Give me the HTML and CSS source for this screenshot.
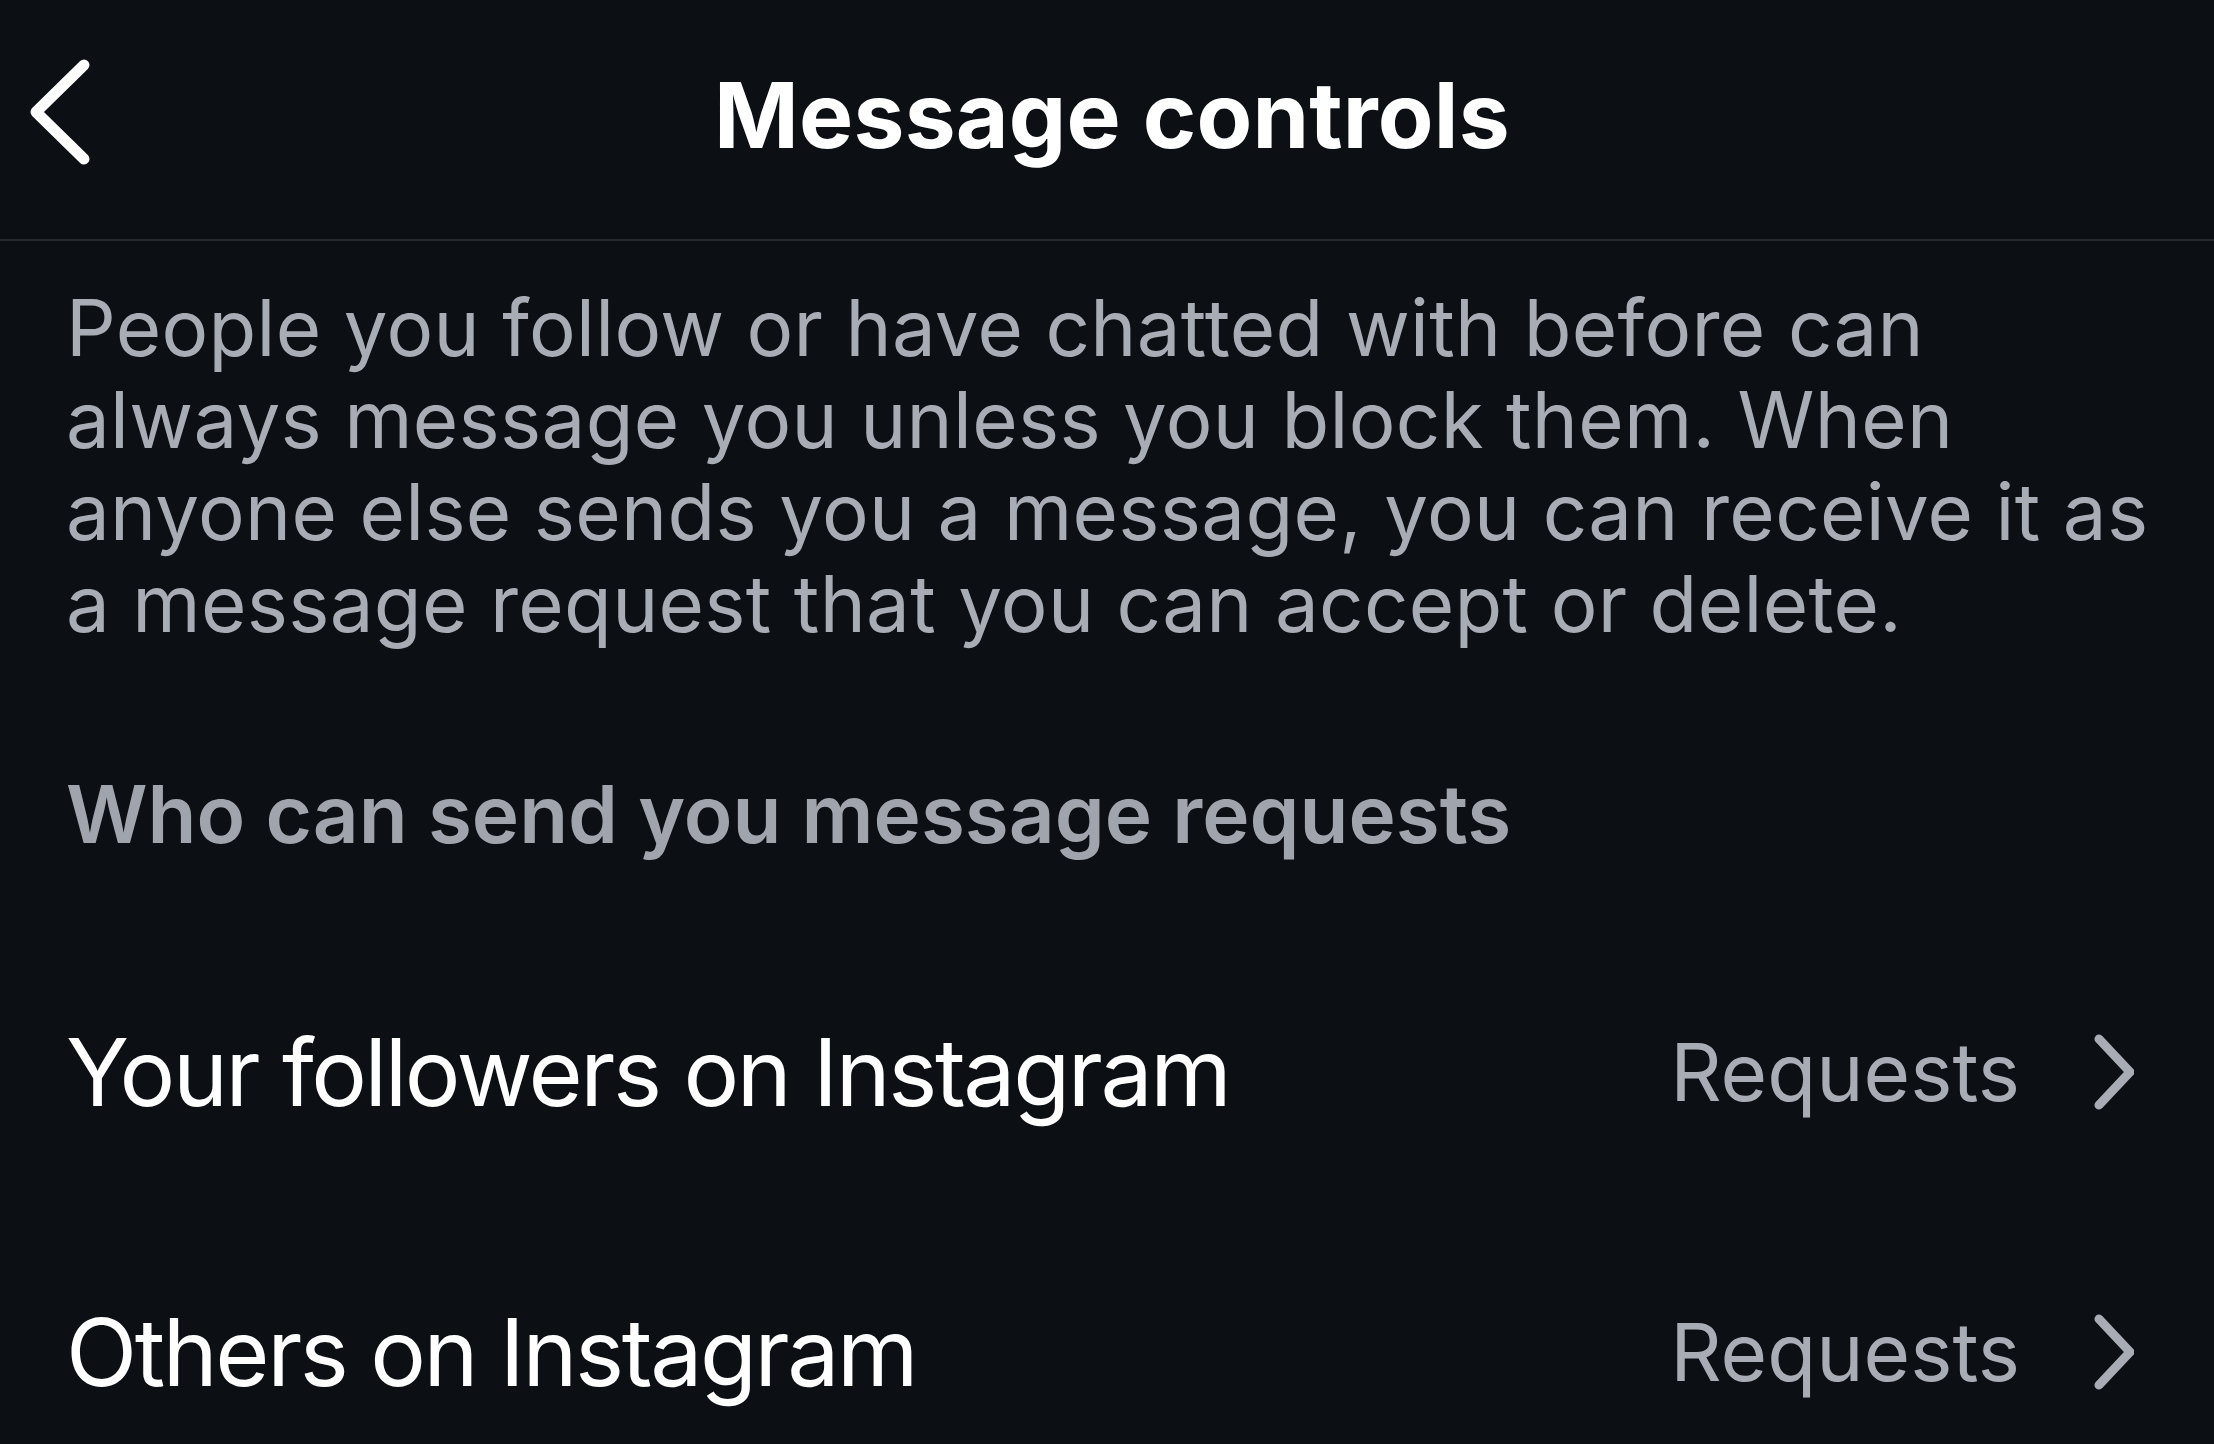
FILE: index.html
```html
<!DOCTYPE html>
<html>
<head>
    <meta charset="UTF-8">
    <meta name="viewport" content="width=device-width, initial-scale=1.0">
    <title>Message controls</title>
    <link rel="stylesheet" href="styles.css">
</head>
<body>
    <header class="top-bar">
        <a href="#" class="back" aria-label="Back">
            <svg width="70" height="120" viewBox="0 0 70 120">
                <path d="M62 13 L14 60 L62 107" fill="none" stroke="#ffffff" stroke-width="11" stroke-linecap="round" stroke-linejoin="round"/>
            </svg>
        </a>
        <h1 class="title">Message controls</h1>
        <div></div>
    </header>

    <main class="content">
        <p class="intro">People you follow or have chatted with before can always message you unless you block them. When anyone else sends you a message, you can receive it as a message request that you can accept or delete.</p>

        <h2 class="section-title">Who can send you message requests</h2>

        <ul class="options">
            <li class="option">
                <span class="option-label">Your followers on Instagram</span>
                <span class="option-value">Requests</span>
                <svg class="chevron" width="44" height="80" viewBox="0 0 44 80">
                    <path d="M9 7 L40 40 L9 73" fill="none" stroke="#a8adb5" stroke-width="9" stroke-linecap="round" stroke-linejoin="round"/>
                </svg>
            </li>
            <li class="option">
                <span class="option-label">Others on Instagram</span>
                <span class="option-value">Requests</span>
                <svg class="chevron" width="44" height="80" viewBox="0 0 44 80">
                    <path d="M9 7 L40 40 L9 73" fill="none" stroke="#a8adb5" stroke-width="9" stroke-linecap="round" stroke-linejoin="round"/>
                </svg>
            </li>
        </ul>
    </main>
</body>
</html>
```

FILE: styles.css
```css
html, body {
    margin: 0;
    padding: 0;
}
body {
    font-family: 'Inter', 'Liberation Sans', sans-serif;
    background-color: #0c0f14;
    color: #ffffff;
    height: 1444px;
    overflow: hidden;
}
.top-bar {
    display: grid;
    grid-template-columns: 1fr auto 1fr;
    align-items: center;
    height: 241px;
    box-sizing: border-box;
    padding: 0 12px 9px 22px;
    border-bottom: 2px solid #262a30;
}
.back {
    display: flex;
    margin-bottom: 6px;
}
.title {
    margin: 0;
    font-size: 91px;
    font-weight: 700;
    line-height: 110px;
    letter-spacing: 0.2px;
    color: #ffffff;
}
.content {
    padding: 41px 40px 0 66px;
}
.intro {
    margin: 0;
    font-size: 78px;
    line-height: 92px;
    letter-spacing: 0.3px;
    color: #a8adb5;
}
.section-title {
    margin: 116px 0 0;
    font-size: 80px;
    font-weight: 600;
    line-height: 96px;
    color: #a0a5ad;
}
.options {
    list-style: none;
    margin: 70px 0 0;
    padding: 0;
}
.option {
    display: flex;
    align-items: center;
    height: 280px;
}
.option-label {
    flex: 1;
    font-size: 93px;
    line-height: 110px;
    letter-spacing: -2.4px;
    color: #ffffff;
}
.option-value {
    font-size: 80px;
    line-height: 96px;
    color: #a8adb5;
}
.chevron {
    margin-left: 70px;
    margin-right: 40px;
}
```
